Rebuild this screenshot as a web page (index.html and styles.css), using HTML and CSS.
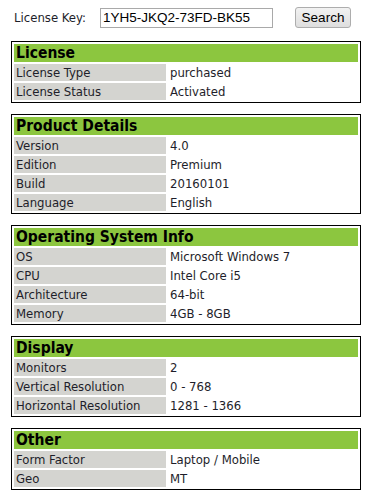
FILE: index.html
```html
<!DOCTYPE html>
<html lang="en">
<head>
    <meta charset="UTF-8">
    <title>License Lookup</title>
    <link rel="stylesheet" href="styles.css">
</head>
<body>
    <div class="searchbar">
        <label class="keyLabel" for="key">License Key:</label>
        <input id="key" class="keyInput" type="text" value="1YH5-JKQ2-73FD-BK55">
        <button class="searchBtn">Search</button>
    </div>

    <div class="box">
        <table>
            <tr><th colspan="2">License</th></tr>
            <tr><td class="name">License Type</td><td>purchased</td></tr>
            <tr><td class="name">License Status</td><td>Activated</td></tr>
        </table>
    </div>

    <div class="box">
        <table>
            <tr><th colspan="2">Product Details</th></tr>
            <tr><td class="name">Version</td><td>4.0</td></tr>
            <tr><td class="name">Edition</td><td>Premium</td></tr>
            <tr><td class="name">Build</td><td>20160101</td></tr>
            <tr><td class="name">Language</td><td>English</td></tr>
        </table>
    </div>

    <div class="box">
        <table>
            <tr><th colspan="2">Operating System Info</th></tr>
            <tr><td class="name">OS</td><td>Microsoft Windows 7</td></tr>
            <tr><td class="name">CPU</td><td>Intel Core i5</td></tr>
            <tr><td class="name">Architecture</td><td>64-bit</td></tr>
            <tr><td class="name">Memory</td><td>4GB - 8GB</td></tr>
        </table>
    </div>

    <div class="box">
        <table>
            <tr><th colspan="2">Display</th></tr>
            <tr><td class="name">Monitors</td><td>2</td></tr>
            <tr><td class="name">Vertical Resolution</td><td>0 - 768</td></tr>
            <tr><td class="name">Horizontal Resolution</td><td>1281 - 1366</td></tr>
        </table>
    </div>

    <div class="box">
        <table>
            <tr><th colspan="2">Other</th></tr>
            <tr><td class="name">Form Factor</td><td>Laptop / Mobile</td></tr>
            <tr><td class="name">Geo</td><td>MT</td></tr>
        </table>
    </div>
</body>
</html>
```

FILE: styles.css
```css
body {
    font-family: "DejaVu Sans Condensed", "DejaVu Sans", sans-serif;
    font-stretch: condensed;
    font-size: 13px;
    color: #1e1e2a;
    margin: 0;
    padding: 7px 11px;
    background-color: #fff;
}

.searchbar {
    display: flex;
    align-items: center;
    height: 21px;
    padding-left: 3px;
    margin-bottom: 13px;
}

.keyLabel {
    width: 86px;
}

.keyInput {
    width: 173px;
    height: 20px;
    box-sizing: border-box;
    padding: 0 2px;
    border: 1px solid #a9a9a9;
    font-family: "Liberation Sans", Arial, sans-serif;
    font-size: 13.5px;
    color: #000;
    margin-right: 22px;
}

.searchBtn {
    width: 56px;
    height: 21px;
    padding: 0;
    border: 1px solid #adadad;
    border-radius: 3px;
    background: linear-gradient(#f2f2f2, #dedede);
    font-family: "Liberation Sans", Arial, sans-serif;
    font-size: 13.5px;
    color: #000;
}

.box {
    border: 1px solid #000;
    margin-bottom: 11px;
}

table {
    width: 100%;
    border-collapse: separate;
    border-spacing: 2px;
}

th {
    background-color: #8cc63f;
    color: #000;
    text-align: left;
    font-size: 15.5px;
    font-weight: bold;
    line-height: 18px;
    padding: 0 2px;
}

td {
    line-height: 15px;
    padding: 1px 2px;
}

td.name {
    width: 148px;
    background-color: #d4d4d0;
}
```
